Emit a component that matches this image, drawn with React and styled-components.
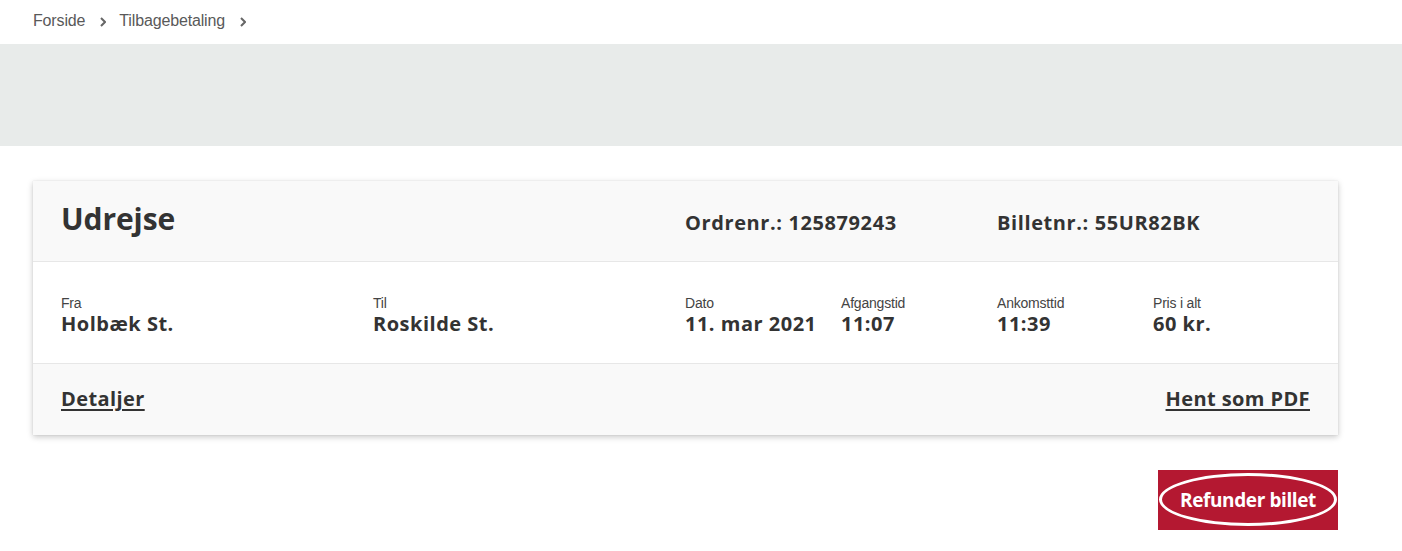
import React from "react";
import styled, { createGlobalStyle } from "styled-components";

const GlobalStyle = createGlobalStyle`
  body {
    margin: 0;
    background: #fff;
    font-family: "Liberation Sans", Arial, sans-serif;
    color: #333;
  }
`;

const Page = styled.div`
  width: 1402px;
`;

const Breadcrumbs = styled.nav`
  height: 44px;
  display: flex;
  align-items: flex-start;
  padding: 12px 0 0 33px;
  box-sizing: border-box;
  font-size: 16px;
  line-height: 18px;
  letter-spacing: -0.15px;
  color: #595959;
`;

const Crumb = styled.span`
  display: block;
`;

const Chevron = styled.svg`
  width: 6px;
  height: 10px;
  margin: 5px 13px 0 15px;
`;

const Band = styled.div`
  height: 102px;
  background: #e8ebea;
`;

const Content = styled.div`
  width: 1305px;
  margin: 35px 0 0 33px;
  display: flex;
  flex-direction: column;
  align-items: flex-end;
`;

const Card = styled.section`
  width: 100%;
  box-shadow: 0 2px 6px rgba(0, 0, 0, 0.22), 0 0 1px rgba(0, 0, 0, 0.12);
  font-family: "Open Sans", sans-serif;
  color: #333;
`;

const Row = styled.div`
  display: grid;
  grid-template-columns: repeat(8, 156px);
  align-items: ${(p) => p.$align || "start"};
  align-content: start;
  padding: ${(p) => p.$top}px 28px 0 28px;
  height: ${(p) => p.$h}px;
  background: ${(p) => (p.$shade ? "#f9f9f9" : "#fff")};
  border-bottom: 1px solid #e7e7e7;
  box-sizing: border-box;
`;

const Title = styled.h2`
  grid-column: span 4;
  margin: 0;
  font-size: 30px;
  line-height: 30px;
  font-weight: 700;
  letter-spacing: -0.1px;
`;

const Ref = styled.div`
  grid-column: span 2;
  font-size: 20px;
  line-height: 24px;
  font-weight: 700;
  letter-spacing: 0.6px;
`;

const Field = styled.div`
  grid-column: span ${(p) => p.$span || 1};
  display: flex;
  flex-direction: column;
`;

const Label = styled.span`
  font-family: "Liberation Sans", Arial, sans-serif;
  font-size: 14px;
  line-height: 16px;
  color: #444;
  letter-spacing: -0.2px;
`;

const Value = styled.span`
  margin-top: 1px;
  font-size: 20px;
  font-weight: 700;
  line-height: 24px;
  letter-spacing: 0.5px;
  white-space: nowrap;
`;

const Footer = styled.div`
  display: flex;
  justify-content: space-between;
  align-items: flex-start;
  padding: 23px 28px 0;
  height: 71px;
  box-sizing: border-box;
  background: #f9f9f9;
`;

const Link = styled.a`
  font-size: 20px;
  line-height: 24px;
  font-weight: 700;
  letter-spacing: 0.4px;
  color: #333;
  text-decoration: underline;
  text-decoration-thickness: 2px;
  text-underline-offset: 3px;
  cursor: pointer;
`;

const RefundButton = styled.button`
  position: relative;
  margin-top: 35px;
  width: 180px;
  height: 60px;
  border: none;
  background: #b41831;
  color: #fff;
  font-family: "Open Sans", sans-serif;
  font-size: 19px;
  font-weight: 700;
  letter-spacing: -0.4px;
  cursor: pointer;
  padding: 0 0 1px;
`;

const Ring = styled.span`
  position: absolute;
  left: 1px;
  right: 1px;
  top: 3px;
  bottom: 4px;
  border: 3px solid #fff;
  border-radius: 50%;
`;

const Arrow = () => (
  <Chevron viewBox="0 0 6 10">
    <path d="M1 1 L5 5 L1 9" fill="none" stroke="#666" strokeWidth="2" />
  </Chevron>
);

const fields = [
  { label: "Fra", value: "Holbæk St.", span: 2 },
  { label: "Til", value: "Roskilde St.", span: 2 },
  { label: "Dato", value: "11. mar 2021" },
  { label: "Afgangstid", value: "11:07" },
  { label: "Ankomsttid", value: "11:39" },
  { label: "Pris i alt", value: "60 kr." },
];

export default function App() {
  return (
    <Page>
      <GlobalStyle />
      <Breadcrumbs>
        <Crumb>Forside</Crumb>
        <Arrow />
        <Crumb>Tilbagebetaling</Crumb>
        <Arrow />
      </Breadcrumbs>
      <Band />
      <Content>
        <Card>
          <Row $h={81} $top={23} $align="baseline" $shade>
            <Title>Udrejse</Title>
            <Ref>Ordrenr.: 125879243</Ref>
            <Ref>Billetnr.: 55UR82BK</Ref>
          </Row>
          <Row $h={102} $top={33}>
            {fields.map((f) => (
              <Field key={f.label} $span={f.span}>
                <Label>{f.label}</Label>
                <Value>{f.value}</Value>
              </Field>
            ))}
          </Row>
          <Footer>
            <Link>Detaljer</Link>
            <Link>Hent som PDF</Link>
          </Footer>
        </Card>
        <RefundButton>
          <Ring />
          Refunder billet
        </RefundButton>
      </Content>
    </Page>
  );
}
